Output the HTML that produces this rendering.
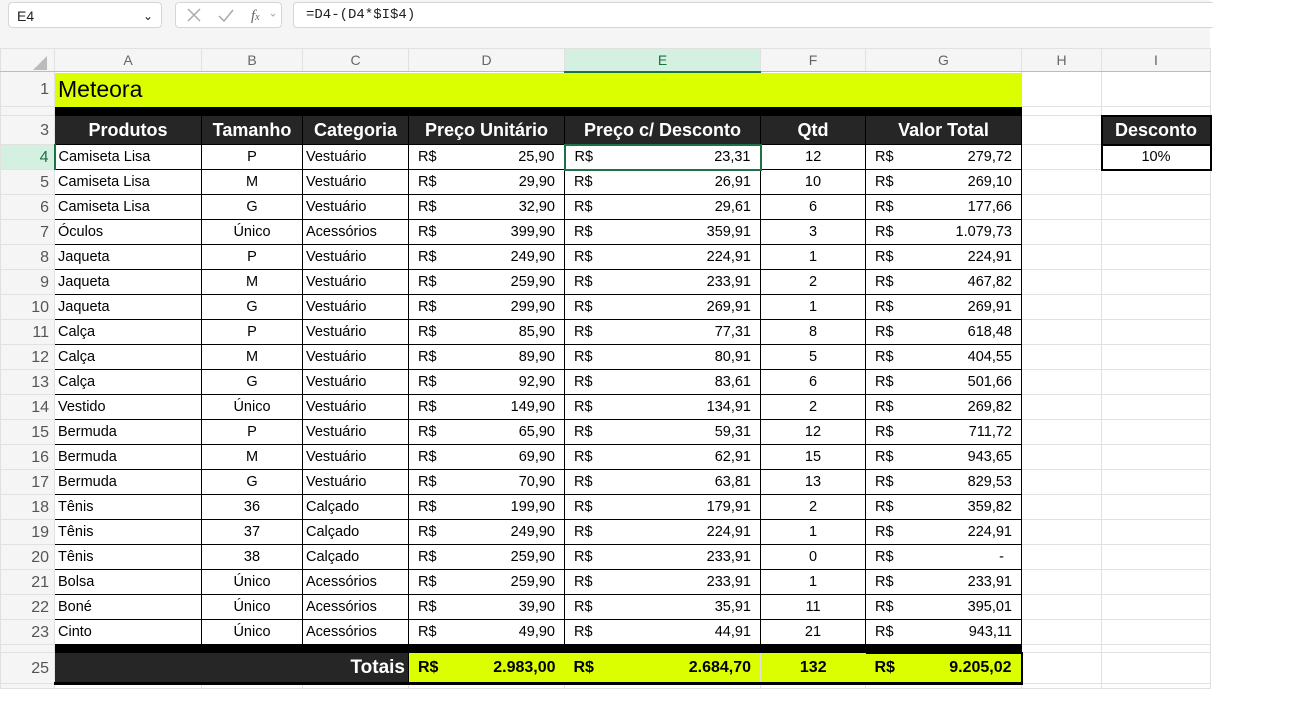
<!DOCTYPE html>
<html><head><meta charset="utf-8"><style>
body{margin:0;width:1312px;height:716px;background:#fff;font-family:"Liberation Sans",sans-serif;position:relative;overflow:hidden}
.top{position:absolute;left:0;top:0;width:1210px;height:48px;background:#f5f5f5}
.nb{position:absolute;left:8px;top:2px;width:154px;height:26px;border:1px solid #d6d6d6;border-radius:4px;background:#fff;font-size:14px;line-height:26px;box-sizing:border-box;padding-left:8px;color:#222}
.fb{position:absolute;left:175px;top:2px;width:107px;height:26px;border:1px solid #d6d6d6;border-radius:4px;background:#fff;box-sizing:border-box}
.fx{position:absolute;left:293px;top:2px;width:920px;height:26px;border:1px solid #d6d6d6;border-right:none;border-radius:4px 0 0 4px;background:#fff;box-sizing:border-box;font-family:"Liberation Mono",monospace;font-size:14px;line-height:24px;padding-left:12px;color:#222}
table{position:absolute;left:0;top:48px;border-collapse:collapse;table-layout:fixed;font-size:14.5px}
td{padding:0 3px;overflow:hidden;white-space:nowrap;border:1px solid #e1e1e1;box-sizing:border-box;line-height:17px}
td.h{background:#f5f5f5;color:#666;text-align:center;font-size:14px;line-height:16px}
td.r{background:#f5f5f5;color:#555;text-align:right;padding-right:5px;font-size:16px}
tr.ch{height:23px}
tr.ch td{border-bottom:1px solid #bbb}
.d td.b{border:1px solid #000}
.c{text-align:center}.rt{text-align:right}
.hd td.b{background:#262626;color:#fff;font-weight:bold;font-size:18px;line-height:20px;text-align:center;border:1px solid #000;border-left-color:#555}
.m{display:flex;justify-content:space-between;padding:0 6px}
</style></head><body>
<div class="top"></div>
<div class="nb">E4<span style="position:absolute;right:8px;top:0;font-size:12px">&#8964;</span></div>
<div class="fb"><svg width="107" height="24" viewBox="0 0 107 24"><path d="M12 6l12 12M24 6L12 18" stroke="#aaa" stroke-width="1.5" fill="none"/><path d="M43 13l5 5 9-11" stroke="#aaa" stroke-width="1.5" fill="none"/><text x="75" y="17" font-size="15" font-style="italic" fill="#666" font-family="Liberation Serif">f<tspan font-size="10">x</tspan></text><path d="M95 11l2 2 2-2" stroke="#aaa" fill="none"/></svg></div>
<div class="fx">=D4-(D4*$I$4)</div>
<table>
<colgroup><col style="width:54px"><col style="width:147px"><col style="width:101px"><col style="width:106px"><col style="width:156px"><col style="width:196px"><col style="width:105px"><col style="width:156px"><col style="width:80px"><col style="width:109px"></colgroup>
<tr class="ch"><td class="h" style="background:#f5f5f5;padding:0"><svg width="50" height="20" style="display:block"><path d="M46 6v14H32z" fill="#bbb"/></svg></td><td class="h">A</td><td class="h">B</td><td class="h">C</td><td class="h">D</td><td class="h" style="background:#d3f0e0;border-bottom:2px solid #1e7145;color:#1e7145">E</td><td class="h">F</td><td class="h">G</td><td class="h">H</td><td class="h">I</td></tr>
<tr style="height:35px"><td class="r">1</td><td colspan="7" style="background:#dcff00;font-size:23px;line-height:26px;border-color:#dcff00">Meteora</td><td></td><td></td></tr>
<tr style="height:9px"><td class="r" style="font-size:8px;line-height:6px"></td><td colspan="7" style="background:#000;border-color:#000;line-height:6px"></td><td style="line-height:6px"></td><td style="line-height:6px"></td></tr>
<tr class="hd" style="height:29px"><td class="r">3</td><td class="b">Produtos</td><td class="b">Tamanho</td><td class="b">Categoria</td><td class="b">Preço Unitário</td><td class="b">Preço c/ Desconto</td><td class="b">Qtd</td><td class="b">Valor Total</td><td></td><td class="b" style="border:2px solid #000">Desconto</td></tr>
<tr class="d" style="height:25px"><td class="r" style="background:#d3f0e0;color:#1e7145;border-right:2px solid #1e7145">4</td><td class="b">Camiseta Lisa</td><td class="b c">P</td><td class="b">Vestuário</td><td class="b"><div class="m"><span>R$</span><span>25,90</span></div></td><td class="b" style="border:2px solid #1e7145"><div class="m"><span>R$</span><span>23,31</span></div></td><td class="b c">12</td><td class="b"><div class="m"><span>R$</span><span>279,72</span></div></td><td></td><td class="b c" style="border:2px solid #000">10%</td></tr>
<tr class="d" style="height:25px"><td class="r">5</td><td class="b">Camiseta Lisa</td><td class="b c">M</td><td class="b">Vestuário</td><td class="b"><div class="m"><span>R$</span><span>29,90</span></div></td><td class="b"><div class="m"><span>R$</span><span>26,91</span></div></td><td class="b c">10</td><td class="b"><div class="m"><span>R$</span><span>269,10</span></div></td><td></td><td></td></tr>
<tr class="d" style="height:25px"><td class="r">6</td><td class="b">Camiseta Lisa</td><td class="b c">G</td><td class="b">Vestuário</td><td class="b"><div class="m"><span>R$</span><span>32,90</span></div></td><td class="b"><div class="m"><span>R$</span><span>29,61</span></div></td><td class="b c">6</td><td class="b"><div class="m"><span>R$</span><span>177,66</span></div></td><td></td><td></td></tr>
<tr class="d" style="height:25px"><td class="r">7</td><td class="b">Óculos</td><td class="b c">Único</td><td class="b">Acessórios</td><td class="b"><div class="m"><span>R$</span><span>399,90</span></div></td><td class="b"><div class="m"><span>R$</span><span>359,91</span></div></td><td class="b c">3</td><td class="b"><div class="m"><span>R$</span><span>1.079,73</span></div></td><td></td><td></td></tr>
<tr class="d" style="height:25px"><td class="r">8</td><td class="b">Jaqueta</td><td class="b c">P</td><td class="b">Vestuário</td><td class="b"><div class="m"><span>R$</span><span>249,90</span></div></td><td class="b"><div class="m"><span>R$</span><span>224,91</span></div></td><td class="b c">1</td><td class="b"><div class="m"><span>R$</span><span>224,91</span></div></td><td></td><td></td></tr>
<tr class="d" style="height:25px"><td class="r">9</td><td class="b">Jaqueta</td><td class="b c">M</td><td class="b">Vestuário</td><td class="b"><div class="m"><span>R$</span><span>259,90</span></div></td><td class="b"><div class="m"><span>R$</span><span>233,91</span></div></td><td class="b c">2</td><td class="b"><div class="m"><span>R$</span><span>467,82</span></div></td><td></td><td></td></tr>
<tr class="d" style="height:25px"><td class="r">10</td><td class="b">Jaqueta</td><td class="b c">G</td><td class="b">Vestuário</td><td class="b"><div class="m"><span>R$</span><span>299,90</span></div></td><td class="b"><div class="m"><span>R$</span><span>269,91</span></div></td><td class="b c">1</td><td class="b"><div class="m"><span>R$</span><span>269,91</span></div></td><td></td><td></td></tr>
<tr class="d" style="height:25px"><td class="r">11</td><td class="b">Calça</td><td class="b c">P</td><td class="b">Vestuário</td><td class="b"><div class="m"><span>R$</span><span>85,90</span></div></td><td class="b"><div class="m"><span>R$</span><span>77,31</span></div></td><td class="b c">8</td><td class="b"><div class="m"><span>R$</span><span>618,48</span></div></td><td></td><td></td></tr>
<tr class="d" style="height:25px"><td class="r">12</td><td class="b">Calça</td><td class="b c">M</td><td class="b">Vestuário</td><td class="b"><div class="m"><span>R$</span><span>89,90</span></div></td><td class="b"><div class="m"><span>R$</span><span>80,91</span></div></td><td class="b c">5</td><td class="b"><div class="m"><span>R$</span><span>404,55</span></div></td><td></td><td></td></tr>
<tr class="d" style="height:25px"><td class="r">13</td><td class="b">Calça</td><td class="b c">G</td><td class="b">Vestuário</td><td class="b"><div class="m"><span>R$</span><span>92,90</span></div></td><td class="b"><div class="m"><span>R$</span><span>83,61</span></div></td><td class="b c">6</td><td class="b"><div class="m"><span>R$</span><span>501,66</span></div></td><td></td><td></td></tr>
<tr class="d" style="height:25px"><td class="r">14</td><td class="b">Vestido</td><td class="b c">Único</td><td class="b">Vestuário</td><td class="b"><div class="m"><span>R$</span><span>149,90</span></div></td><td class="b"><div class="m"><span>R$</span><span>134,91</span></div></td><td class="b c">2</td><td class="b"><div class="m"><span>R$</span><span>269,82</span></div></td><td></td><td></td></tr>
<tr class="d" style="height:25px"><td class="r">15</td><td class="b">Bermuda</td><td class="b c">P</td><td class="b">Vestuário</td><td class="b"><div class="m"><span>R$</span><span>65,90</span></div></td><td class="b"><div class="m"><span>R$</span><span>59,31</span></div></td><td class="b c">12</td><td class="b"><div class="m"><span>R$</span><span>711,72</span></div></td><td></td><td></td></tr>
<tr class="d" style="height:25px"><td class="r">16</td><td class="b">Bermuda</td><td class="b c">M</td><td class="b">Vestuário</td><td class="b"><div class="m"><span>R$</span><span>69,90</span></div></td><td class="b"><div class="m"><span>R$</span><span>62,91</span></div></td><td class="b c">15</td><td class="b"><div class="m"><span>R$</span><span>943,65</span></div></td><td></td><td></td></tr>
<tr class="d" style="height:25px"><td class="r">17</td><td class="b">Bermuda</td><td class="b c">G</td><td class="b">Vestuário</td><td class="b"><div class="m"><span>R$</span><span>70,90</span></div></td><td class="b"><div class="m"><span>R$</span><span>63,81</span></div></td><td class="b c">13</td><td class="b"><div class="m"><span>R$</span><span>829,53</span></div></td><td></td><td></td></tr>
<tr class="d" style="height:25px"><td class="r">18</td><td class="b">Tênis</td><td class="b c">36</td><td class="b">Calçado</td><td class="b"><div class="m"><span>R$</span><span>199,90</span></div></td><td class="b"><div class="m"><span>R$</span><span>179,91</span></div></td><td class="b c">2</td><td class="b"><div class="m"><span>R$</span><span>359,82</span></div></td><td></td><td></td></tr>
<tr class="d" style="height:25px"><td class="r">19</td><td class="b">Tênis</td><td class="b c">37</td><td class="b">Calçado</td><td class="b"><div class="m"><span>R$</span><span>249,90</span></div></td><td class="b"><div class="m"><span>R$</span><span>224,91</span></div></td><td class="b c">1</td><td class="b"><div class="m"><span>R$</span><span>224,91</span></div></td><td></td><td></td></tr>
<tr class="d" style="height:25px"><td class="r">20</td><td class="b">Tênis</td><td class="b c">38</td><td class="b">Calçado</td><td class="b"><div class="m"><span>R$</span><span>259,90</span></div></td><td class="b"><div class="m"><span>R$</span><span>233,91</span></div></td><td class="b c">0</td><td class="b"><div class="m"><span>R$</span><span>-&nbsp;&nbsp;</span></div></td><td></td><td></td></tr>
<tr class="d" style="height:25px"><td class="r">21</td><td class="b">Bolsa</td><td class="b c">Único</td><td class="b">Acessórios</td><td class="b"><div class="m"><span>R$</span><span>259,90</span></div></td><td class="b"><div class="m"><span>R$</span><span>233,91</span></div></td><td class="b c">1</td><td class="b"><div class="m"><span>R$</span><span>233,91</span></div></td><td></td><td></td></tr>
<tr class="d" style="height:25px"><td class="r">22</td><td class="b">Boné</td><td class="b c">Único</td><td class="b">Acessórios</td><td class="b"><div class="m"><span>R$</span><span>39,90</span></div></td><td class="b"><div class="m"><span>R$</span><span>35,91</span></div></td><td class="b c">11</td><td class="b"><div class="m"><span>R$</span><span>395,01</span></div></td><td></td><td></td></tr>
<tr class="d" style="height:25px"><td class="r">23</td><td class="b">Cinto</td><td class="b c">Único</td><td class="b">Acessórios</td><td class="b"><div class="m"><span>R$</span><span>49,90</span></div></td><td class="b"><div class="m"><span>R$</span><span>44,91</span></div></td><td class="b c">21</td><td class="b"><div class="m"><span>R$</span><span>943,11</span></div></td><td></td><td></td></tr>
<tr style="height:8px"><td class="r" style="line-height:6px"></td><td colspan="7" style="background:#000;border-color:#000;line-height:6px"></td><td style="line-height:6px"></td><td style="line-height:6px"></td></tr>
<tr style="height:31px;font-weight:bold;font-size:16px"><td class="r" style="font-weight:normal">25</td><td colspan="3" style="background:#262626;color:#fff;text-align:right;font-size:19px;border:1px solid #000;border-bottom:3px solid #000">Totais</td><td style="background:#dcff00;border:1px solid #000;border-right:none;border-bottom:3px solid #000"><div class="m"><span>R$</span><span>2.983,00</span></div></td><td style="background:#dcff00;border-top:1px solid #000;border-bottom:3px solid #000;border-left:none"><div class="m"><span>R$</span><span>2.684,70</span></div></td><td class="c" style="background:#dcff00;border:1px solid #000;border-right:none;border-bottom:3px solid #000">132</td><td style="background:#dcff00;border:2px solid #000;border-left:none;border-bottom:3px solid #000"><div class="m"><span>R$</span><span>9.205,02</span></div></td><td></td><td></td></tr>
<tr style="height:5px"><td class="r" style="line-height:4px"></td><td></td><td></td><td></td><td></td><td></td><td></td><td></td><td></td><td></td></tr>
</table>
</body></html>
